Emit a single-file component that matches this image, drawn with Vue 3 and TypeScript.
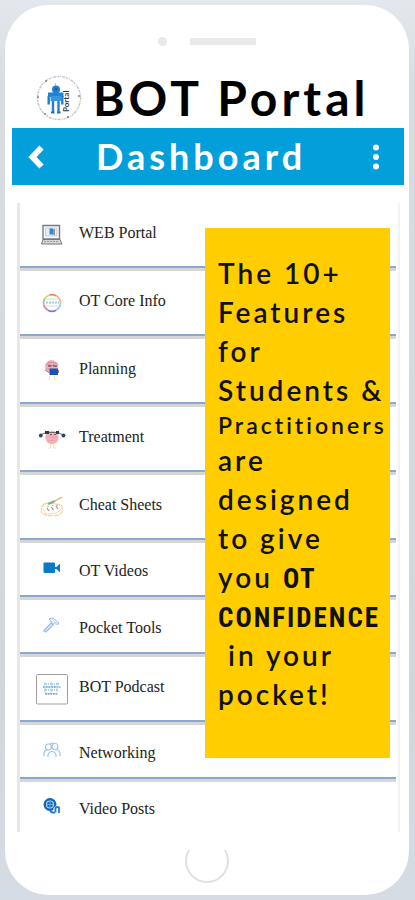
<script setup lang="ts">
type IconName =
  | 'laptop' | 'ring' | 'reader' | 'lifter' | 'notes'
  | 'camera' | 'hammer' | 'podcast' | 'people' | 'globe'

interface MenuItem {
  label: string
  icon: IconName
  compact?: boolean
}

const items: MenuItem[] = [
  { label: 'WEB Portal', icon: 'laptop' },
  { label: 'OT Core Info', icon: 'ring' },
  { label: 'Planning', icon: 'reader' },
  { label: 'Treatment', icon: 'lifter' },
  { label: 'Cheat Sheets', icon: 'notes' },
  { label: 'OT Videos', icon: 'camera', compact: true },
  { label: 'Pocket Tools', icon: 'hammer', compact: true },
  { label: 'BOT Podcast', icon: 'podcast' },
  { label: 'Networking', icon: 'people', compact: true },
  { label: 'Video Posts', icon: 'globe', compact: true },
]
</script>

<template>
  <div class="stage">
    <div class="phone">
      <div class="sensors">
        <span class="lens"></span>
        <span class="speaker"></span>
      </div>

      <header class="brand">
        <svg class="logo" viewBox="0 0 46 46" aria-hidden="true">
          <circle cx="23" cy="23" r="21.5" fill="none" stroke="#c3c6d2" stroke-width="1.5" stroke-dasharray="2 1 1 1 3 1" />
          <g fill="#7c8497">
            <circle cx="10" cy="6" r="1.1" /><circle cx="43" cy="21" r="1" /><circle cx="32" cy="42" r="1.1" />
            <circle cx="9" cy="39" r="1" /><circle cx="2" cy="22" r="1" />
          </g>
          <path d="M19.5 8v4" stroke="#9fc4e6" stroke-width="1" />
          <circle cx="20" cy="14.5" r="4" fill="#2280cf" />
          <path d="M12 17.5h15.5v4.500h-15.500z" fill="#1686d8" />
          <path d="M14.500 21h10.500v5h-10.500z" fill="#3a97dc" />
          <path d="M12.700 21v8.500M26.300 21v8.500M17 26v11M22.500 26v11" stroke="#2280cf" stroke-width="2.400" />
          <path d="M15 37.500h3.500M21 37.500h3.500" stroke="#1d73bd" stroke-width="2" />
          <circle cx="20" cy="14" r="1.500" fill="#17609f" />
          <text x="-37" y="32.500" transform="rotate(-90)" font-family="Lato, sans-serif" font-size="8" font-weight="700" fill="#333842">Portal</text>
        </svg>
        <h1>BOT Portal</h1>
      </header>

      <nav class="bar" aria-label="Page">
        <button class="back" type="button" aria-label="Back">
          <svg width="16" height="24" viewBox="0 0 16 24"><path d="M13.500 2.500 4.500 12l9 9.500" fill="none" stroke="#fff" stroke-width="6" /></svg>
        </button>
        <h2>Dashboard</h2>
        <button class="more" type="button" aria-label="More">
          <svg width="6" height="26" viewBox="0 0 6 26" fill="#fff"><circle cx="3" cy="3.500" r="3" /><circle cx="3" cy="13" r="3" /><circle cx="3" cy="22.500" r="3" /></svg>
        </button>
      </nav>

      <main class="screen">
        <ul class="menu">
          <li v-for="item in items" :key="item.label" :class="{ compact: item.compact }">
            <a href="#">
              <span class="icon">
                <svg v-if="item.icon === 'laptop'" viewBox="0 0 32 32">
                  <path d="M7 6.500h16.500v13.500h-16.500z" fill="#fafafa" stroke="#777b80" stroke-width="1.400" />
                  <path d="M9.500 9h11.500v8h-11.500z" fill="#e4eef6" stroke="#b8bcc1" stroke-width=".7" />
                  <path d="M13.500 9.500h3.500v6h-3.500z" fill="#3489ce" /><path d="M18 10v6" stroke="#444" stroke-width="1" />
                  <path d="M7 20.500h17l2 4.500h-20.500z" fill="#d8d8d8" stroke="#777" stroke-width="1" />
                  <path d="M8 22.500h14" stroke="#999" stroke-width="1" stroke-dasharray="2 1" />
                </svg>
                <svg v-else-if="item.icon === 'ring'" viewBox="0 0 32 32" fill="none" stroke-width="1.700">
                  <path d="M8.500 12a8.500 8.500 0 0 1 5-4" stroke="#e7c85a" />
                  <path d="M13.500 8a8.500 8.500 0 0 1 7 1" stroke="#ee7b62" />
                  <path d="M20.500 9a8.500 8.500 0 0 1 4 7" stroke="#f0b68b" />
                  <path d="M24.500 16a8.500 8.500 0 0 1-4.500 7.300" stroke="#a7c5ef" />
                  <path d="M20 23.300a8.500 8.500 0 0 1-8 0" stroke="#9270bc" />
                  <path d="M12 23.300a8.500 8.500 0 0 1-4.300-6" stroke="#d48bb9" />
                  <path d="M7.700 17.300a8.500 8.500 0 0 1 .8-5.300" stroke="#86cda5" />
                  <path d="M10 12h12M9 19h14" stroke="#c3e6dc" stroke-width="1" />
                  <path d="M10 15.500h13" stroke="#9acfe6" stroke-width="2" stroke-dasharray="2 1" />
                </svg>
                <svg v-else-if="item.icon === 'reader'" viewBox="0 0 32 32">
                  <circle cx="15.500" cy="11.500" r="6.500" fill="#edb2ba" />
                  <path d="M10 10q2-2 4 0t4-1 4 1M10 14h5M12 7.500h6" fill="none" stroke="#d98a9a" stroke-width="1" />
                  <path d="M12 11h3.500M17 11h4" stroke="#7a5562" stroke-width="1.300" />
                  <path d="M13.500 13.500h8.500v6.500h-8.500z" fill="#1553b5" />
                  <path d="M9 15l4 2.500M22.500 15v3" stroke="#9a7d88" stroke-width="1" />
                  <path d="M14 20.500v3.500h-2M18.500 20.500v3.500h2" fill="none" stroke="#f8dcb5" stroke-width="1" />
                </svg>
                <svg v-else-if="item.icon === 'lifter'" viewBox="0 0 32 32">
                  <circle cx="16" cy="14.500" r="6.700" fill="#f4b1b8" />
                  <path d="M11 14q3-2 5 0t5-1M12 17.500h7" fill="none" stroke="#ee9fa9" stroke-width="1" />
                  <path d="M4 12l6-2.500h12l6 3" fill="none" stroke="#7d6469" stroke-width="1" />
                  <path d="M9 9.500h4M20 9.500h3" stroke="#243b48" stroke-width="3" />
                  <circle cx="4.800" cy="12.500" r="1.900" fill="#28475a" /><circle cx="27.500" cy="12.500" r="1.900" fill="#28475a" />
                  <path d="M14 11.500h2M18 11.500h2" stroke="#6d5560" stroke-width="1" />
                  <path d="M14.500 21v4h-2M18 21v4h2" fill="none" stroke="#f8dcb5" stroke-width="1" />
                </svg>
                <svg v-else-if="item.icon === 'notes'" viewBox="0 0 32 32" fill="none">
                  <path d="M9 12.500 5.500 16v6l5 2.500h11l4.500-3v-7l-8-2z" stroke="#f6d79c" stroke-width="1.300" stroke-dasharray="5 1" />
                  <path d="M7 18l3 5 11-1 4-4" stroke="#f0dcb1" stroke-width="1" />
                  <path d="M12 13l7-3" stroke="#7fb08c" stroke-width="2.200" /><path d="M18 10.500l8-4.500" stroke="#c9b674" stroke-width="1.400" />
                  <path d="M11 17l2 3M15.500 16l2 3M20 15l2 3" stroke="#a18a93" stroke-width="1.100" />
                  <path d="M11 16l2-.8M15.500 15l2-.5M20 14.500l2-.5" stroke="#9ecab2" stroke-width="1" />
                </svg>
                <svg v-else-if="item.icon === 'camera'" viewBox="0 0 32 32" fill="#0878cb">
                  <path d="M8.500 9.500h9.500a1 1 0 0 1 1 1v8.500a1 1 0 0 1-1 1h-9.500a1 1 0 0 1-1-1v-8.500a1 1 0 0 1 1-1z" /><path d="M19 14h1.500l3.500-3.500v9l-3.500-3.500h-1.500z" />
                </svg>
                <svg v-else-if="item.icon === 'hammer'" viewBox="0 0 32 32">
                  <path d="M8 20.500 15 13l2 2-7 7q-2 0-2-1.500z" fill="#dbeafa" stroke="#93bde7" stroke-width="1.200" />
                  <path d="M13 9q3-2 5.500 0l2 2 2.500 2-1.500 2-2.500-2.500-2 2-2-2.500q0-2-2-3z" fill="#e4effb" stroke="#93bde7" stroke-width="1" />
                </svg>
                <svg v-else-if="item.icon === 'podcast'" viewBox="0 0 32 32">
                  <rect x=".5" y="1.500" width="31" height="29.500" rx="1" fill="#fff" stroke="#9d9d9d" />
                  <path d="M8 11h16M8 17h14" stroke="#a9d2eb" stroke-width="2" stroke-dasharray="3 1 1 1" />
                  <path d="M7 14h17.500" stroke="#6f9fb8" stroke-width="1.500" stroke-dasharray="2 .7" />
                  <path d="M9 9v11M15 9v11M21 9v10" stroke="#b7d9ec" stroke-width="1" />
                  <path d="M9 20.800h13" stroke="#7b838a" stroke-width="1.200" stroke-dasharray="2 .6" />
                </svg>
                <svg v-else-if="item.icon === 'people'" viewBox="0 0 32 32" fill="none" stroke="#9ac3e8" stroke-width="1.100">
                  <circle cx="12.500" cy="12" r="3" /><circle cx="19" cy="11.500" r="3" />
                  <path d="M8 21v-2.500q0-3 3-3.500M12 22v-2q1-3.500 4-3.500t4 3.500v2M20.500 15q3 0 3.500 3.500v2.500" />
                  <path d="M14 9q2-2 4 0" />
                </svg>
                <svg v-else viewBox="0 0 32 32">
                  <circle cx="14" cy="13.500" r="6.500" fill="#1368b3" />
                  <circle cx="14" cy="13.500" r="3.500" fill="none" stroke="#a9d1ef" stroke-width="1.200" />
                  <path d="M11 13.500h6M14 10v7" stroke="#67a8dd" stroke-width="1" />
                  <path d="M17.500 17l3-2.500h4.500v8h-7.500z" fill="#fff" />
                  <path d="M14 20q2 2 5 1.500M19 17.500q1.500-2.500 4-1v5.500M19.500 17v4.500" fill="none" stroke="#2179c6" stroke-width="1.800" />
                </svg>
              </span>
              <span class="label">{{ item.label }}</span>
            </a>
          </li>
        </ul>

        <aside class="callout">
          <p>
            The 10+<br />Features<br />for<br />Students &amp;<br />
            <span class="small">Practitioners</span>
            are<br />designed<br />to give<br />you <strong>OT</strong><br />
            <strong>CONFIDENCE</strong><br />&nbsp;in your<br />pocket!
          </p>
        </aside>
      </main>

      <footer class="chin"><button class="home" type="button" aria-label="Home"></button></footer>
    </div>
  </div>
</template>

<style>
body {
  background: #d5dade;
}
</style>

<style scoped>
.stage {
  padding: 5px 6px 5px 5px;
  background: linear-gradient(180deg, #e4e8ee 0, #d8dde0 80px, #d0d6da 700px, #d6dce4 900px);
}

.phone {
  border-radius: 44px;
  background: #fff;
  overflow: hidden;
}

.sensors {
  display: flex;
  align-items: center;
  justify-content: center;
  gap: 23px;
  height: 73px;
}

.lens {
  width: 9px;
  height: 9px;
  border-radius: 50%;
  background: #e9e9e9;
}

.speaker {
  width: 66px;
  height: 7px;
  background: #e9e9e9;
}

.brand {
  display: flex;
  align-items: center;
  gap: 11px;
  height: 40px;
  padding: 0 0 10px 31px;
}

.logo {
  flex: none;
  width: 46px;
  height: 46px;
}

h1,
h2 {
  margin: 0;
  font-family: Lato, sans-serif;
  font-weight: 700;
  white-space: nowrap;
}

h1 {
  color: #000;
  font-size: 48px;
  line-height: 40px;
  letter-spacing: 4px;
}

.bar {
  display: flex;
  align-items: center;
  height: 57px;
  margin: 0 5px 0 7px;
  padding: 0 25px 0 16px;
  background: #029fdb;
}

.bar h2 {
  flex: 1;
  padding-left: 52px;
  color: #fff;
  font-size: 36px;
  line-height: 57px;
  letter-spacing: 4px;
}

button {
  display: flex;
  padding: 0;
  border: 0;
  background: none;
}

.screen {
  position: relative;
  margin: 18px 9px 0 12px;
  padding-right: 2px;
  border-right: 2px solid #f0f2f4;
}

.menu {
  margin: 0;
  padding: 0;
  border-left: 3px solid #e8e8e9;
  list-style: none;
}

.menu li {
  border-bottom: 3px solid #d6d6d7;
}

.menu a {
  display: flex;
  align-items: center;
  gap: 11px;
  height: 63px;
  padding-left: 16px;
  border-bottom: 2px solid #8ba8d0;
  color: #222;
  text-decoration: none;
}

.menu .compact a {
  height: 52px;
}

.menu li:last-child,
.menu li:last-child a {
  border-bottom: 0;
}

.menu li:last-child a {
  height: 50px;
}

.icon {
  width: 32px;
  height: 32px;
}

.icon svg {
  display: block;
}

.label {
  padding-bottom: 3px;
  font-family: "Liberation Serif", serif;
  font-size: 16px;
  line-height: 20px;
}

.compact .label {
  padding: 3px 0 0;
}

.callout {
  position: absolute;
  top: 25px;
  right: 8px;
  width: 185px;
  height: 530px;
  box-sizing: border-box;
  padding: 26px 0 0 13px;
  background: #ffcd00;
}

.callout p {
  margin: 0;
  color: #111;
  font-family: Lato, sans-serif;
  font-size: 28px;
  font-weight: 600;
  line-height: 39px;
  letter-spacing: 3px;
  white-space: nowrap;
}

.callout .small {
  display: block;
  font-size: 23px;
  line-height: 31px;
}

.callout strong {
  font-family: "Roboto Condensed", "Liberation Sans Narrow", sans-serif;
  font-size: 27px;
  font-weight: 700;
  line-height: 20px;
  letter-spacing: 2px;
}

.chin {
  display: flex;
  justify-content: center;
  padding: 7px 0 12px;
}

.home {
  width: 44px;
  height: 44px;
  border: 2px solid #dfdfdf;
  border-radius: 50%;
  clip-path: inset(11px 0 0 0);
}
</style>
